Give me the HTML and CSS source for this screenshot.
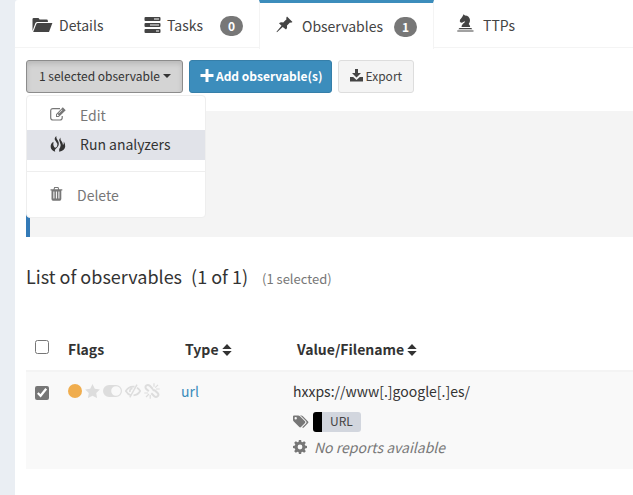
FILE: index.html
```html
<!DOCTYPE html>
<html lang="en">
<head>
<meta charset="utf-8">
<title>Observables</title>
<link rel="stylesheet" href="styles.css">
</head>
<body>
<main class="panel">
  <nav class="tabs">
    <a class="tab tab-details" href="#details">
      <svg class="icon" width="21" height="16" viewBox="0 0 21 16"><path d="M.5 14V2.200Q.5 1 1.700 1h4.400q.9 0 1.200 1l.2.6h7q1.400 0 1.400 1.400v1H5.400Q4 5 3.400 6z"/><path d="M5.800 6H20.400L17 15H1.200L4.300 7q.4-1 1.500-1z"/></svg>
      <span>Details</span>
    </a>
    <a class="tab tab-tasks" href="#tasks">
      <svg class="icon" width="17" height="16" viewBox="0 0 17 16"><path fill-rule="evenodd" d="M1.500 0h14q1 0 1 1v2q0 1-1 1h-14q-1 0-1-1V1q0-1 1-1zM10 1.500v1h5v-1zM1.500 6h14q1 0 1 1v2q0 1-1 1h-14q-1 0-1-1V7q0-1 1-1zM6 7.500v1h9v-1zM1.500 12h14q1 0 1 1v2q0 1-1 1h-14q-1 0-1-1v-2q0-1 1-1zM12 13.500v1h3v-1z"/></svg>
      <span>Tasks</span><span class="badge">0</span>
    </a>
    <a class="tab tab-active" href="#observables" aria-current="page">
      <svg class="icon" width="17" height="17" viewBox="0 0 17 17"><path d="M11 .5 16.500 6l-1.500.7-1-.3-3 3.200q.6 2.500-1 4L6.700 11 1 16.200l-.5-.4L5.500 9.800 3 7.200q1.600-1.400 4.200-.8L10.500 3.200l-.3-1.300z"/></svg>
      <span>Observables</span><span class="badge">1</span>
    </a>
    <a class="tab tab-ttps" href="#ttps">
      <svg class="icon" width="17" height="18" viewBox="0 0 17 18"><path d="M4.500 13q0-2 1.500-3.300Q8 8.500 8.200 7.200 6.500 7.400 5.500 8.500L4 8.700 2.800 7.600 3 5.800 5 3.200 6 1.500 6.500.2 8 1.400Q12.500 1.500 13 6q.2 2.300-1.300 4 1.300 1.200 1.500 3zM2.500 14h11.800l1 1.300h-14zM.3 16.500h16.200v1H.3z"/></svg>
      <span>TTPs</span>
    </a>
  </nav>

  <div class="content">
    <div class="toolbar">
      <div class="dropdown">
        <button class="btn btn-open" type="button" aria-expanded="true">1 selected observable<span class="caret"></span></button>
        <div class="menu" role="menu">
          <a class="item" role="menuitem" href="#edit">
            <svg class="icon" width="16" height="14" viewBox="0 0 16 14"><path fill="none" stroke="currentColor" stroke-width="1.200" d="M10 1.600H3Q.7 1.600.7 3.800v7Q.7 13 3 13h7q2.200 0 2.200-2.200V9"/><path fill-rule="evenodd" d="M12.800.3 15.700 3.200 8.800 10H6V7.200zM7 7.600V9h1.400l.5-.5-1.400-1.400zM12 2.600 8.400 6.200l.4.4 3.600-3.600z"/></svg>
            <span>Edit</span>
          </a>
          <a class="item item-on" role="menuitem" href="#run">
            <svg class="icon" width="16" height="16" viewBox="0 0 16 16"><path d="M6.300 0Q3.500 2.500 5.500 4.800 8 7.500 7 10.500 5.800 12.300 4.300 11.300 2.700 9.800 3.500 5.800.3 7.800.7 11.200q.5 3.200 4.500 4.600-.9-1.800.6-3Q9.500 10 8.700 6.500 8 4.800 7.200 3.600 6.100 2 6.300 0z"/><path d="M10.300 1.500Q8.600 3.500 9.700 5.700 11.300 9 10.200 11.200q-1.900 2-1 4.600Q14.500 14.800 15.200 10.800q.3-2.800-1.400-5.300.3 2.500-.8 3.500Q12.800 6.700 11.600 5.200 10.300 3.700 10.300 1.500z"/></svg>
            <span>Run analyzers</span>
          </a>
          <div class="divider"></div>
          <a class="item" role="menuitem" href="#delete">
            <svg class="icon" width="13" height="14" viewBox="0 0 13 14"><path fill-rule="evenodd" d="M4.200 0h4.200l.8 2.200h3.100v1.200h-1V12q0 1.800-1.500 1.800H3Q1.500 13.800 1.500 12V3.400H.5V2.200h3zM5 1l-.4 1.200h3.500L7.700 1zM3.400 4.500v7h1v-7zM5.900 4.500v7h1v-7zM8.400 4.500v7h1v-7z"/></svg>
            <span>Delete</span>
          </a>
        </div>
      </div>
      <button class="btn btn-primary" type="button"><svg class="icon" width="14" height="13" viewBox="0 0 13 13"><path d="M5 0h3v5h5v3H8v5H5V8H0V5h5z"/></svg><span>Add observable(s)</span></button>
      <button class="btn" type="button"><svg class="icon" width="13" height="13" viewBox="0 0 13 13"><path d="M5 0h3v4h3L6.500 8.600 2 4h3zM0 8h3.200l3.300 3L9.800 8H13v4.500H0z"/></svg><span>Export</span></button>
    </div>

    <section class="well"></section>

    <h1 class="heading">List of observables <span class="count">(1 of 1)</span><small>(1 selected)</small></h1>

    <table class="list">
      <thead>
        <tr>
          <th class="col-check"><input type="checkbox" aria-label="Select all observables"></th>
          <th class="col-flags">Flags</th>
          <th class="col-type">Type<svg class="icon sort" width="10" height="12" viewBox="0 0 10 12"><path d="M5 0l4.700 5H.3zM.3 7h9.400L5 12z"/></svg></th>
          <th class="col-value">Value/Filename<svg class="icon sort" width="10" height="12" viewBox="0 0 10 12"><path d="M5 0l4.700 5H.3zM.3 7h9.400L5 12z"/></svg></th>
        </tr>
      </thead>
      <tbody>
        <tr>
          <td class="col-check"><input type="checkbox" checked aria-label="Select observable"></td>
          <td>
            <div class="flag-row">
              <svg class="icon tlp" width="14" height="14" viewBox="0 0 14 14"><circle cx="7" cy="7" r="7"/></svg>
              <svg class="icon" width="15" height="14" viewBox="0 0 15 14"><path d="M7.500 0l2.300 4.700 5.100.7-3.700 3.600.9 5.100-4.600-2.400-4.600 2.400.9-5.100L.1 5.400l5.100-.7z"/></svg>
              <svg class="icon" width="19" height="12" viewBox="0 0 19 12"><path fill-rule="evenodd" d="M6 0h7a6 6 0 0 1 0 12H6A6 6 0 0 1 6 0zM13 1.200a4.800 4.800 0 1 0 0 9.600 4.800 4.800 0 0 0 0-9.600z"/></svg>
              <svg class="icon" width="16" height="14" viewBox="0 0 16 14"><g fill="none" stroke="currentColor" stroke-width="1.700"><path d="M6 11.300Q2.800 10.500.8 7 3.500 2.700 8 2.600h1.500M12 3.800q2 1.200 3.200 3.200-2.200 4-6.700 4.400M7.500 4.300Q4.500 4.700 5 8"/><path stroke-width="1.400" d="M12 .7 4.800 13.300"/></g></svg>
              <svg class="icon" width="16" height="16" viewBox="0 0 16 16"><g fill="none" stroke="currentColor" stroke-width="2"><path d="M8.800 6 5.800 2.800Q4 1.200 2.300 2.600T2.300 6l2.500 2.300M7.300 10.300l3 3q1.700 1.400 3.300 0t0-3.300l-2.800-2.600Q9.500 6.800 8.500 7.500"/><path stroke-width="1.200" d="M10 .2v3.500M11.200 4.600 14 1.800M12 6h3.700M.3 10H4M2 14l3-3M6.200 12v3.700"/></g></svg>
            </div>
          </td>
          <td><a class="type" href="#url">url</a></td>
          <td>
            <div class="line">hxxps://www[.]google[.]es/</div>
            <div class="line line-tags">
              <svg class="icon" width="16" height="14" viewBox="0 0 16 14"><path fill-rule="evenodd" d="M0 1.500Q0 .5 1 .5h4.200q1 0 1.800.7l5 5q.8.8 0 1.700L8 12q-.8.800-1.700 0L.8 6.500Q0 5.700 0 4.800zM2.700 2a1.200 1.200 0 1 0 0 2.400 1.200 1.200 0 0 0 0-2.400z"/><path d="M7 .5h1.200q1 0 1.700.7l5.200 5.200q.7.800 0 1.600L11 12.200q-1 1-1.800 0L13 8.500q1.200-1.300 0-2.600L8.500 1.400z"/></svg>
              <span class="tag">URL</span>
            </div>
            <div class="line line-reports">
              <svg class="icon" width="14" height="14" viewBox="0 0 14 14"><path fill-rule="evenodd" d="M5.900 0h2.200l.4 1.900 1 .4L11.200 1.200l1.600 1.600-1.100 1.700.4 1 1.900.4v2.200l-1.900.4-.4 1 1.100 1.700-1.600 1.600-1.700-1.100-1 .4-.4 1.900H5.900l-.4-1.900-1-.4-1.700 1.100-1.600-1.600 1.100-1.700-.4-1L0 8.100V5.900l1.900-.4.4-1L1.200 2.800l1.600-1.600 1.700 1.100 1-.4zM7 4.600a2.400 2.400 0 1 0 0 4.800 2.400 2.400 0 0 0 0-4.800z"/></svg>
              <em>No reports available</em>
            </div>
          </td>
        </tr>
      </tbody>
    </table>
  </div>
</main>
</body>
</html>
```
FILE: styles.css
```css
* { box-sizing: border-box; }

body {
  margin: 0;
  background: #eaeef3;
  color: #333;
  font-family: "Noto Sans CJK SC", "Open Sans", sans-serif;
  font-size: 14px;
  line-height: 20px;
}

a { color: inherit; text-decoration: none; }

.icon { display: block; flex: none; fill: currentColor; }

.panel {
  min-height: 100vh;
  margin-left: 15px;
  background: #fff;
  border-radius: 3px 0 0 0;
}

.tabs {
  display: flex;
  height: 48px;
  border-bottom: 1px solid #f4f4f4;
  color: #444;
}

.tab {
  display: flex;
  align-items: center;
  padding: 2px 16px 0;
  gap: 6px;
  white-space: nowrap;
}

.tab-details { padding-left: 17px; width: 113px; }
.tab-tasks { width: 131px; }
.tab-active {
  width: 175px;
  height: 49px;
  gap: 9px;
  padding-top: 0;
  background: #fff;
  border: solid #f4f4f4;
  border-width: 3px 1px 0;
  border-top-color: #3c8dbc;
}
.tab-active .icon { margin-bottom: 4px; }
.tab-ttps { padding-left: 23px; gap: 9px; }
.tab-ttps .icon { margin-bottom: 4px; }

.badge {
  min-width: 23px;
  margin-top: 2px;
  margin-left: auto;
  border-radius: 10px;
  background: #777;
  color: #fff;
  font-size: 12px;
  font-weight: 700;
  text-align: center;
}

.content { padding: 12px 0 0 11px; }

.toolbar { display: flex; gap: 6px; }

.dropdown { position: relative; }

.btn {
  display: flex;
  align-items: center;
  gap: 3px;
  height: 33px;
  padding: 0 11px 2px;
  border: 1px solid #ddd;
  border-radius: 3px;
  background: #f4f4f4;
  color: #444;
  font: inherit;
  font-size: 12px;
  white-space: nowrap;
}

.btn-open {
  padding-left: 12px;
  border-color: #8c8c8c;
  background: #d4d4d4;
  box-shadow: inset 0 3px 5px rgba(0, 0, 0, 0.125);
  color: #333;
}

.btn-primary {
  gap: 2px;
  padding-right: 8px;
  padding-left: 10px;
  border-color: #367fa9;
  background: #3c8dbc;
  color: #fff;
  font-weight: 700;
}

.caret {
  border: 4px solid transparent;
  border-top-color: currentColor;
  border-bottom: 0;
}

.menu {
  position: absolute;
  top: 100%;
  left: 0;
  width: 180px;
  margin-top: 2px;
  padding: 5px 0 7px;
  border: 1px solid #eee;
  border-radius: 4px;
  background: #fff;
  color: #777;
}

.item {
  display: flex;
  align-items: center;
  gap: 14px;
  height: 29px;
  padding: 0 23px 2px;
}

.item-on { height: 30px; background: #e1e3e9; color: #333; }

.divider { height: 1px; margin: 11px 0 9px; background: #eee; }

.item .icon { margin-top: -1px; }

.well {
  height: 126px;
  margin-top: 18px;
  border-left: 4px solid #337ab7;
  background: #f4f4f4;
}

.heading {
  margin: 26px 0 0;
  font-size: 18px;
  font-weight: 400;
  line-height: 26px;
}

.heading .count { margin-left: 5px; }
.heading small { margin-left: 14px; color: #777; font-size: 13px; }

.list {
  width: 100%;
  margin-top: 36px;
  border-collapse: collapse;
  table-layout: fixed;
}

th {
  height: 43px;
  padding: 0 0 0 4px;
  font-weight: 700;
  text-align: left;
  vertical-align: middle;
  white-space: nowrap;
}

td { padding: 9px 0 12px; vertical-align: top; }

tbody tr { border-top: 2px solid #f4f4f4; background: #f9f9f9; }

.col-check { width: 42px; padding-left: 9px; }
.col-flags { width: 113px; padding-left: 0; }
.col-type { width: 112px; }

input[type="checkbox"] {
  display: block;
  width: 14px;
  height: 14px;
  margin: 0;
  accent-color: #767676;
}

th input[type="checkbox"] { margin-bottom: 4px; }
td input[type="checkbox"] { margin-top: 5px; }

.sort { display: inline-block; margin-left: 3px; vertical-align: -1px; }

.flag-row { display: flex; align-items: center; gap: 3px; height: 20px; color: #ddd; }
.tlp { color: #f0ad4e; }
.type { color: #3c8dbc; }

.line { display: flex; align-items: center; height: 20px; }
.line-tags { gap: 4px; margin-top: 10px; height: 22px; color: #777; }
.line-reports { gap: 7px; margin-top: 4px; color: #777; }

.tag {
  padding: 0 8px 2px;
  border-left: 9px solid #000;
  border-radius: 3px;
  background: #d2d6de;
  color: #444;
  font-size: 12px;
  line-height: 18px;
}
```
